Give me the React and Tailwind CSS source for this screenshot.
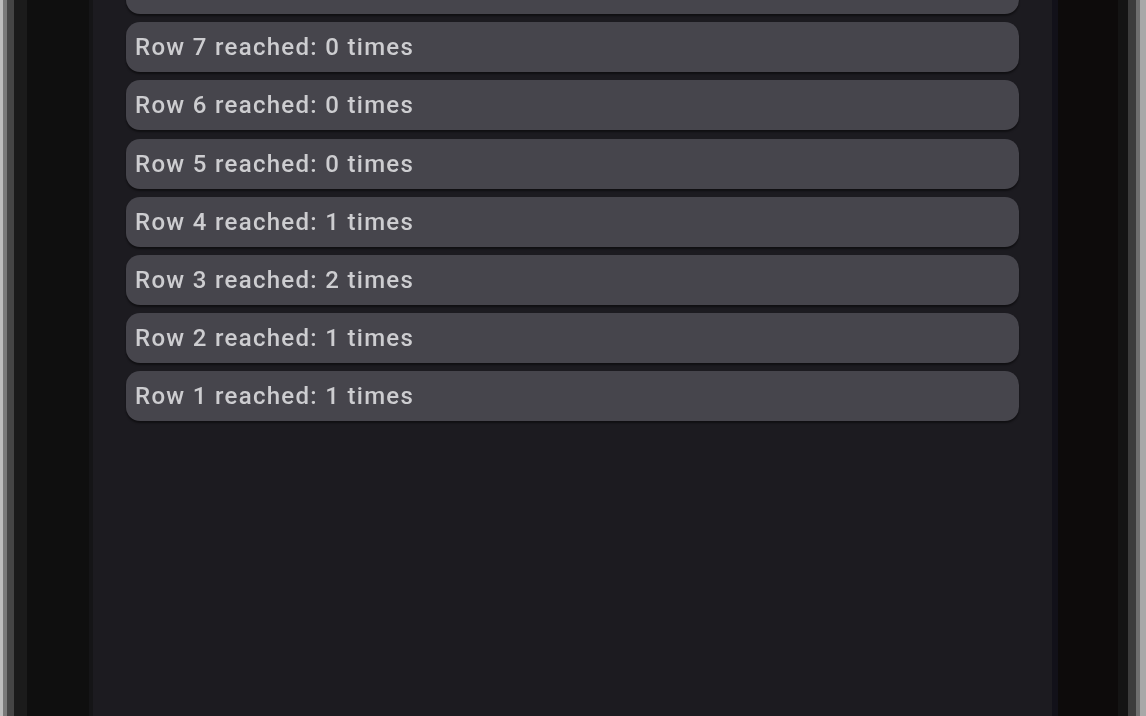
const counts = [
  { row: 8, times: 0 },
  { row: 7, times: 0 },
  { row: 6, times: 0 },
  { row: 5, times: 0 },
  { row: 4, times: 1 },
  { row: 3, times: 2 },
  { row: 2, times: 1 },
  { row: 1, times: 1 },
];

const App = () => {
  return (
    <div className="w-full h-screen overflow-hidden flex bg-[#0e0d0d] font-['Roboto',sans-serif]">
      {/* left bezel */}
      <div className="flex h-full shrink-0">
        <div className="w-[3px] bg-[#bdbdbd]" />
        <div className="w-[4px] bg-[#7a7a7a]" />
        <div className="w-[7px] bg-[#454545]" />
        <div className="w-[13px] bg-[#1b1b1b]" />
        <div className="w-[62px] bg-[#0f0f0f]" />
        <div className="w-[4px] bg-[#151517]" />
      </div>

      {/* screen */}
      <div className="flex-1 h-full bg-[#1c1b20] px-[33px] overflow-hidden">
        <div className="flex flex-col gap-[8.2px] -mt-[36px]">
          {counts.map((c) => (
            <div
              key={c.row}
              className="h-[50px] shrink-0 rounded-[14px] bg-[#46454c] shadow-[0_2px_2px_rgba(0,0,0,0.45)] flex items-center pl-[9px]"
            >
              <span className="text-[24px] leading-none font-medium text-[#cdcdd0] tracking-[1.3px] blur-[0.5px]">
                Row {c.row} reached: {c.times} times
              </span>
            </div>
          ))}
        </div>
      </div>

      {/* right bezel */}
      <div className="flex h-full shrink-0">
        <div className="w-[6px] bg-[#121119]" />
        <div className="w-[60px] bg-[#0d0b0b]" />
        <div className="w-[10px] bg-[#141414]" />
        <div className="w-[8px] bg-[#3c3c3c]" />
        <div className="w-[4px] bg-[#6e6e6e]" />
        <div className="w-[6px] bg-[#a8a8a8]" />
      </div>
    </div>
  );
};

export default App;
